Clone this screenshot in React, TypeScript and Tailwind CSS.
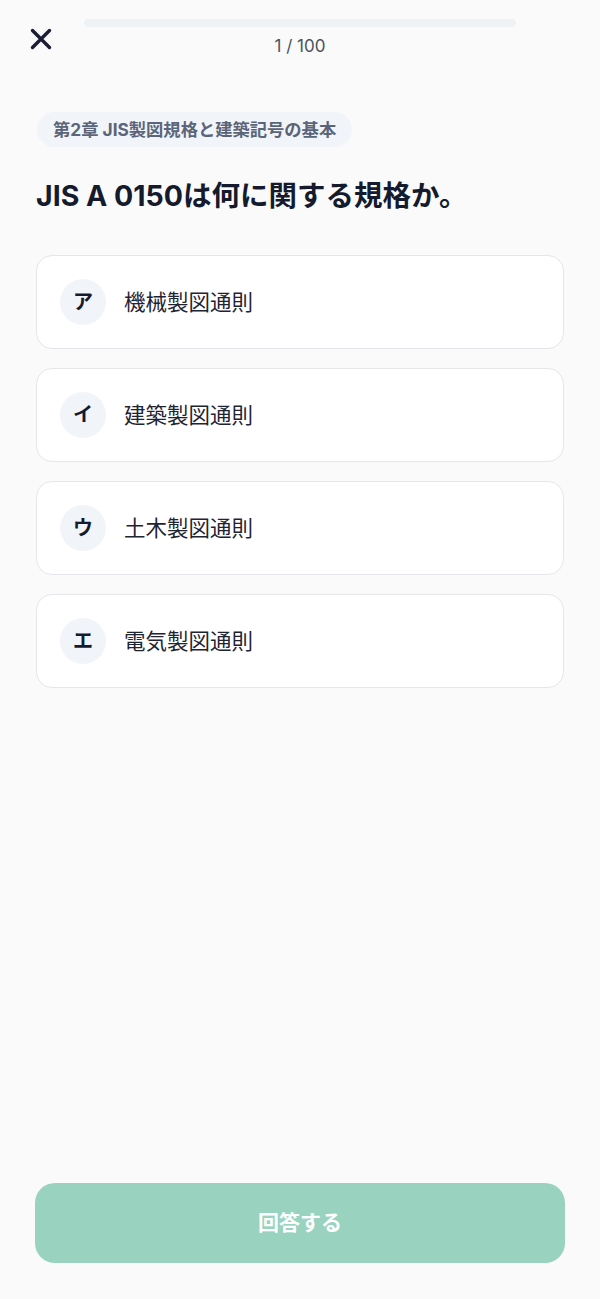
import React from "react";

const options = [
  { k: "ア", t: "機械製図通則" },
  { k: "イ", t: "建築製図通則" },
  { k: "ウ", t: "土木製図通則" },
  { k: "エ", t: "電気製図通則" },
];

export default function App() {
  return (
    <div
      className="min-h-[1299px] h-[1299px] bg-[#fafafa] flex flex-col"
      style={{ fontFamily: '"Inter", "Noto Sans CJK JP", sans-serif' }}
    >
      <div className="grid grid-cols-[84px_1fr_84px] pt-[19px]">
        <div className="pl-[29px] pt-[8px]">
          <svg width="24" height="24" viewBox="0 0 24 24" fill="none">
            <path d="M3.5 3.5L20.5 20.5M20.5 3.5L3.5 20.5" stroke="#1a1d33" strokeWidth="3.4" strokeLinecap="round" />
          </svg>
        </div>
        <div className="flex flex-col items-center">
          <div className="w-full h-[8px] rounded-full bg-[#eff2f5]" />
          <div className="mt-[7px] text-[17px] leading-[24px] text-[#4b5260]">1 / 100</div>
        </div>
        <div />
      </div>

      <div className="px-[36px]">
        <div className="mt-[54px] ml-[1px] inline-flex items-center h-[35px] px-[16px] rounded-full bg-[#f1f4f8] text-[17.3px] font-bold text-[#5b6579]">
          第2章 JIS製図規格と建築記号の基本
        </div>
        <h1 className="mt-[31px] text-[28.5px] leading-[36px] font-bold text-[#151a2d]">
          JIS A 0150は何に関する規格か。
        </h1>
        <div className="mt-[41px] flex flex-col gap-[19px]">
          {options.map((o) => (
            <div
              key={o.k}
              className="h-[94px] rounded-[16px] border border-[#e4e6ea] bg-white flex items-center pl-[23px]"
            >
              <div className="w-[46px] h-[46px] rounded-full bg-[#f1f4f8] flex items-center justify-center text-[20px] font-bold text-[#151a2d]">
                {o.k}
              </div>
              <div className="ml-[18px] text-[21.5px] text-[#1f2433]">{o.t}</div>
            </div>
          ))}
        </div>
      </div>

      <div className="mt-auto px-[35px] pb-[36px]">
        <div className="h-[80px] rounded-[20px] bg-[#99d3c0] flex items-center justify-center text-[21px] font-bold text-white">
          回答する
        </div>
      </div>
    </div>
  );
}
